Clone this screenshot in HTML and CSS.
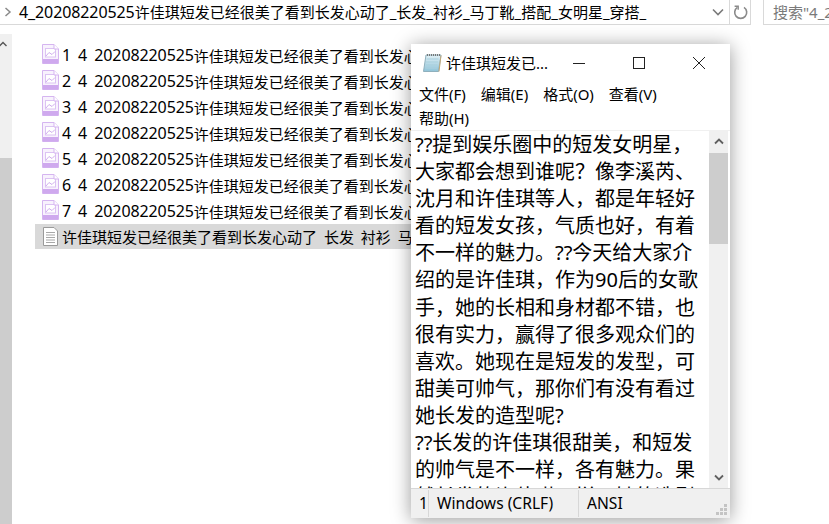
FILE: index.html
```html
<!DOCTYPE html>
<html lang="zh-CN">
<head>
    <meta charset="UTF-8">
    <title>文件夹</title>
    <link rel="stylesheet" href="styles.css">
</head>

<body>
    <header class="toolbar">
        <div class="address">
            <svg class="chevron" width="8" height="12" viewBox="0 0 8 12"><path d="M1.5 2 L6 6 L1.5 10" fill="none" stroke="#8a8a8a" stroke-width="1.5"/></svg>
            <span class="path"><span class="num">4_20208220525</span>许佳琪短发已经很美了看到长发心动了_长发_衬衫_马丁靴_搭配_女明星_穿搭_</span>
            <svg class="dropdown" width="12" height="8" viewBox="0 0 12 8"><path d="M1 1.5 L6 6.5 L11 1.5" fill="none" stroke="#7a7a7a" stroke-width="1.6"/></svg>
            <div class="refresh">
                <svg width="16" height="16" viewBox="0 0 16 16"><path d="M5.4 3.4 A6 6 0 1 0 12 3.4" fill="none" stroke="#8a8a8a" stroke-width="1.6"/><path d="M2.6 2.2 L6.2 2.2 L6.2 5.8" fill="none" stroke="#8a8a8a" stroke-width="1.4"/></svg>
            </div>
        </div>
        <div class="search">搜索"4_2</div>
    </header>

    <main class="explorer">
        <aside class="navscroll">
            <svg class="navup" width="8" height="6" viewBox="0 0 8 6"><path d="M0.5 5 L4 1.5 L7.5 5" fill="none" stroke="#555" stroke-width="1.4"/></svg>
            <div class="navthumb"></div>
        </aside>
        <ul class="files">
            <li><svg class="jpg" width="17" height="20" viewBox="0 0 17 20"><use href="#jpgicon"/></svg><span class="num">1 4 20208220525</span><span>许佳琪短发已经很美了看到长发心动了</span></li>
            <li><svg class="jpg" width="17" height="20" viewBox="0 0 17 20"><use href="#jpgicon"/></svg><span class="num">2 4 20208220525</span><span>许佳琪短发已经很美了看到长发心动了</span></li>
            <li><svg class="jpg" width="17" height="20" viewBox="0 0 17 20"><use href="#jpgicon"/></svg><span class="num">3 4 20208220525</span><span>许佳琪短发已经很美了看到长发心动了</span></li>
            <li><svg class="jpg" width="17" height="20" viewBox="0 0 17 20"><use href="#jpgicon"/></svg><span class="num">4 4 20208220525</span><span>许佳琪短发已经很美了看到长发心动了</span></li>
            <li><svg class="jpg" width="17" height="20" viewBox="0 0 17 20"><use href="#jpgicon"/></svg><span class="num">5 4 20208220525</span><span>许佳琪短发已经很美了看到长发心动了</span></li>
            <li><svg class="jpg" width="17" height="20" viewBox="0 0 17 20"><use href="#jpgicon"/></svg><span class="num">6 4 20208220525</span><span>许佳琪短发已经很美了看到长发心动了</span></li>
            <li><svg class="jpg" width="17" height="20" viewBox="0 0 17 20"><use href="#jpgicon"/></svg><span class="num">7 4 20208220525</span><span>许佳琪短发已经很美了看到长发心动了</span></li>
            <li class="selected">
                <svg class="doc" width="17" height="19" viewBox="0 0 17 19"><path d="M1.5 0.5 H12 L15.5 4 V18.5 H1.5 Z" fill="#fff" stroke="#9a9a9a"/><path d="M4 5.5 H13 M4 8 H13 M4 10.5 H13 M4 13 H13 M4 15.5 H13" stroke="#a8a8a8"/></svg>
                <span class="seltext">许佳琪短发已经很美了看到长发心动了 长发 衬衫 马丁靴</span>
            </li>
        </ul>
    </main>

    <section class="notepad">
        <div class="titlebar">
            <svg class="noteicon" width="20" height="20" viewBox="0 0 20 20">
                <defs>
                    <linearGradient id="notefill" x1="0" y1="0" x2="0" y2="1">
                        <stop offset="0" stop-color="#e2f1f6"/>
                        <stop offset="1" stop-color="#8fc3d8"/>
                    </linearGradient>
                </defs>
                <path d="M4 2 H19 L16.5 18.5 H1.5 Z" fill="url(#notefill)" stroke="#8fb0bd"/>
                <path d="M5 2 H18" stroke="#777" stroke-width="2" stroke-dasharray="1 1"/>
                <path d="M4.5 6 H16.5 M4 9 H16 M3.8 12 H15.6 M3.4 15 H15" stroke="#a9cfdd"/>
                <path d="M17 18.5 L19 2.5" stroke="#c2a878"/>
            </svg>
            <span class="wintitle">许佳琪短发已...</span>
            <div class="winbtns">
                <svg width="14" height="14" viewBox="0 0 14 14"><path d="M1 7.5 H13" stroke="#222"/></svg>
                <svg width="14" height="14" viewBox="0 0 14 14"><rect x="1.5" y="1.5" width="11" height="11" fill="none" stroke="#222"/></svg>
                <svg width="14" height="14" viewBox="0 0 14 14"><path d="M1 1 L13 13 M13 1 L1 13" stroke="#222"/></svg>
            </div>
        </div>
        <nav class="menu">
            <span>文件(F)</span><span>编辑(E)</span><span>格式(O)</span><span>查看(V)</span><span>帮助(H)</span>
        </nav>
        <div class="editor">
            <p class="content">??提到娱乐圈中的短发女明星，<br>大家都会想到谁呢？像李溪芮、<br>沈月和许佳琪等人，都是年轻好<br>看的短发女孩，气质也好，有着<br>不一样的魅力。??今天给大家介<br>绍的是许佳琪，作为90后的女歌<br>手，她的长相和身材都不错，也<br>很有实力，赢得了很多观众们的<br>喜欢。她现在是短发的发型，可<br>甜美可帅气，那你们有没有看过<br>她长发的造型呢?<br>??长发的许佳琪很甜美，和短发<br>的帅气是不一样，各有魅力。果<br>然长发的许佳琪一样，她的造型</p>
            <div class="vscroll">
                <svg width="10" height="7" viewBox="0 0 10 7"><path d="M1 5.5 L5 1.5 L9 5.5" fill="none" stroke="#606060" stroke-width="1.8"/></svg>
                <div class="vthumb"></div>
                <svg class="vdown" width="10" height="7" viewBox="0 0 10 7"><path d="M1 1.5 L5 5.5 L9 1.5" fill="none" stroke="#606060" stroke-width="1.8"/></svg>
            </div>
        </div>
        <footer class="status">
            <span class="cell pos">1</span>
            <span class="cell eol">Windows (CRLF)</span>
            <span class="cell enc">ANSI</span>
            <svg class="grip" width="12" height="12" viewBox="0 0 12 12"><path d="M8 0h3v3H8zM4 4h3v3H4zM8 4h3v3H8zM0 8h3v3H0zM4 8h3v3H4zM8 8h3v3H8z" fill="#c4c4c4"/></svg>
        </footer>
    </section>

    <svg class="defs" width="0" height="0">
        <symbol id="jpgicon" viewBox="0 0 17 20">
            <path d="M0.5 0.5 H12 L16.5 5 V19.5 H0.5 Z" fill="#f8f2fd" stroke="#d5b5f0"/>
            <rect x="1" y="15" width="15" height="4.5" fill="#cfa9ee"/>
            <rect x="3.5" y="4.5" width="10" height="8.5" fill="#fff" stroke="#dcc3f3"/>
            <path d="M4 12 L7 8.5 L10 10.5 L13 7.5" fill="none" stroke="#d0aeee"/>
            <path d="M12 0.5 V5 H16.5" fill="#fff" stroke="#d5b5f0"/>
        </symbol>
    </svg>
</body>
</html>
```

FILE: styles.css
```css
*
{
    margin:0;
    padding:0;
    box-sizing: border-box;
    font-family:"Noto Sans","Noto Sans CJK SC",sans-serif;
}
body
{
    width:829px;
    height:524px;
    background:#fff;
    overflow:hidden;
    position:relative;
    color:#000;
}
.defs{
    position:absolute;
}
/* digits and latin run a bit bigger than the chinese next to them */
.num{
    font-size:16px;
    word-spacing:3px;
    letter-spacing:-0.1px;
}

/* top address bar */
.toolbar{
    display:flex;
    height:25px;
}
.address{
    display:flex;
    align-items:center;
    width:751px;
    height:25px;
    padding-left:4px;
    border-bottom:1px solid #d9d9d9;
    border-right:1px solid #d9d9d9;
}
.chevron{
    flex:none;
}
.path{
    margin-left:7px;
    font-size:15px;
    line-height:22px;
    white-space:nowrap;
    flex:1;
}
.dropdown{
    flex:none;
    margin-right:5px;
}
.refresh{
    display:flex;
    align-items:center;
    justify-content:center;
    width:21px;
    height:24px;
    border-left:1px solid #d9d9d9;
}
.search{
    width:66px;
    height:25px;
    margin-left:12px;
    padding-left:9px;
    border-left:1px solid #d9d9d9;
    border-bottom:1px solid #d9d9d9;
    color:#7a7a7a;
    font-size:15px;
    line-height:24px;
    white-space:nowrap;
    overflow:hidden;
}

/* explorer body */
.explorer{
    display:flex;
    height:499px;
}
.navscroll{
    width:12px;
    margin-top:9px;
    background:#f0f0f0;
    display:flex;
    flex-direction:column;
    align-items:center;
}
.navup{
    margin-top:7px;
    margin-left:-6px;
}
.navthumb{
    width:100%;
    flex:1;
    margin-top:111px;
    background:#cdcdcd;
}
.files{
    list-style:none;
    margin-top:17px;
    margin-left:23px;
    width:390px;
}
.files li{
    display:flex;
    align-items:center;
    height:26px;
    padding-left:7px;
    font-size:15px;
    white-space:nowrap;
}
.jpg{
    flex:none;
    margin-right:3px;
    margin-top:-3px;
}
.files .selected{
    height:25px;
    background:#d9d9d9;
}
.doc{
    flex:none;
    margin-right:3px;
}
.seltext{
    word-spacing:3px;
}

/* notepad window, floats over the explorer */
.notepad{
    position:absolute;
    left:411px;
    top:44px;
    width:319px;
    height:474px;
    display:flex;
    flex-direction:column;
    background:#fff;
    box-shadow:0 2px 18px rgba(0, 0, 0, 0.4);
}
.titlebar{
    display:flex;
    align-items:center;
    flex:none;
    height:38px;
    padding-left:11px;
    padding-bottom:1px;
}
.noteicon{
    flex:none;
}
.wintitle{
    margin-left:4px;
    font-size:15px;
    white-space:nowrap;
    flex:1;
}
.winbtns{
    display:flex;
    gap:46px;
    padding-right:24px;
}
.menu{
    display:flex;
    flex-wrap:wrap;
    flex:none;
    height:48px;
    padding:1px 20px 0 8px;
    column-gap:15px;
    font-size:15px;
    line-height:23px;
}
.editor{
    flex:1;
    display:flex;
    min-height:0;
    overflow:hidden;
    border-top:1px solid #f0f0f0;
}
.content{
    width:298px;
    padding-left:4px;
    font-size:20px;
    line-height:27.1px;
    white-space:nowrap;
    overflow:hidden;
}
.vscroll{
    width:19px;
    background:#f0f0f0;
    display:flex;
    flex-direction:column;
    align-items:center;
    padding-top:7px;
}
.vthumb{
    width:100%;
    height:91px;
    margin-top:8px;
    background:#cdcdcd;
}
.vdown{
    margin-top:auto;
    margin-bottom:7px;
}
.status{
    display:flex;
    flex:none;
    align-items:center;
    height:30px;
    background:#f0f0f0;
    border-top:1px solid #d7d7d7;
    font-family:"Open Sans",sans-serif;
    font-size:15.6px;
    position:relative;
}
.cell{
    display:block;
    height:27px;
    line-height:26px;
    white-space:nowrap;
    overflow:hidden;
}
.pos{
    width:17px;
    padding-left:8px;
}
.eol{
    width:150px;
    padding-left:8px;
    border-left:1px solid #d7d7d7;
}
.enc{
    padding-left:8px;
    border-left:1px solid #d7d7d7;
}
.grip{
    position:absolute;
    right:2px;
    bottom:2px;
}
```
